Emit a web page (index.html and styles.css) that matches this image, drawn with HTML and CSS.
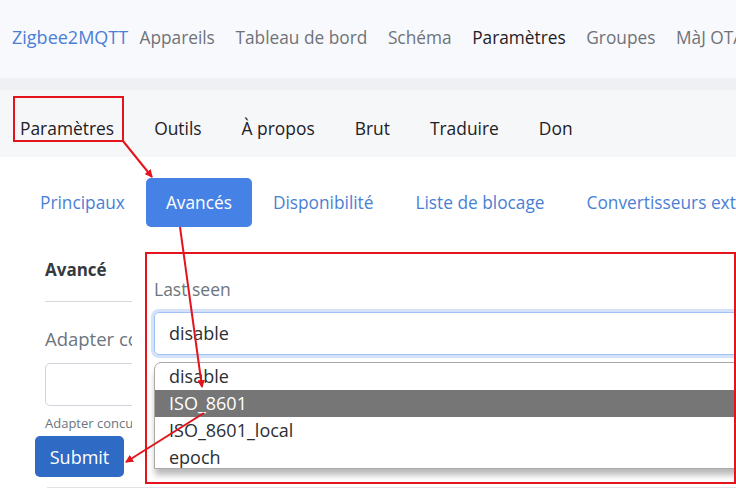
FILE: index.html
```html
<!DOCTYPE html>
<html lang="fr">
<head>
<meta charset="utf-8">
<title>Zigbee2MQTT - Paramètres</title>
<link rel="stylesheet" href="styles.css">
</head>
<body>
<header class="navbar">
  <a class="brand">Zigbee2MQTT</a>
  <nav class="nav-links">
    <a class="nav-link">Appareils</a>
    <a class="nav-link">Tableau de bord</a>
    <a class="nav-link">Schéma</a>
    <a class="nav-link active">Paramètres</a>
    <a class="nav-link">Groupes</a>
    <a class="nav-link">MàJ OTA</a>
  </nav>
</header>
<div class="band"></div>
<nav class="tabs">
  <a class="tab active">Paramètres</a>
  <a class="tab">Outils</a>
  <a class="tab">À propos</a>
  <a class="tab">Brut</a>
  <a class="tab">Traduire</a>
  <a class="tab">Don</a>
</nav>
<main class="content">
  <div class="pills">
    <a class="pill">Principaux</a>
    <a class="pill active">Avancés</a>
    <a class="pill">Disponibilité</a>
    <a class="pill">Liste de blocage</a>
    <a class="pill">Convertisseurs externes</a>
  </div>
  <div class="body">
    <section class="form-col">
      <h3 class="section-title">Avancé</h3>
      <div class="rule"></div>
      <label class="field-label">Adapter concurrent</label>
      <div class="input"></div>
      <div class="help">Adapter concurrent description</div>
      <button class="submit">Submit</button>
    </section>
    <section class="zoom-panel">
      <div class="callout">
        <div class="ls-label">Last seen</div>
        <div class="select">disable</div>
        <ul class="options">
          <li>disable</li>
          <li class="hl">ISO_8601</li>
          <li>ISO_8601_local</li>
          <li>epoch</li>
        </ul>
      </div>
    </section>
  </div>
  <div class="bottom-rule"></div>
</main>
<svg class="annotations" width="736" height="489" viewBox="0 0 736 489">
  <defs>
    <marker id="ah" markerWidth="8" markerHeight="8" refX="7" refY="4" orient="auto" markerUnits="userSpaceOnUse">
      <path d="M0,0 L8,4 L0,8 Z" fill="#e3141c"/>
    </marker>
  </defs>
  <rect x="14" y="97" width="109" height="44" fill="none" stroke="#e3141c" stroke-width="2"/>
  <line x1="123" y1="141" x2="152" y2="177" stroke="#e3141c" stroke-width="2" marker-end="url(#ah)"/>
  <line x1="180" y1="227" x2="202" y2="387" stroke="#e3141c" stroke-width="2" marker-end="url(#ah)"/>
  <line x1="204" y1="413" x2="126" y2="462" stroke="#e3141c" stroke-width="2" marker-end="url(#ah)"/>
</svg>
</body>
</html>
```
FILE: styles.css
```css
* { box-sizing: border-box; }
html, body { margin: 0; padding: 0; }
body {
  width: 736px;
  height: 489px;
  overflow: hidden;
  position: relative;
  background: #fff;
  font-family: "Open Sans", "Noto Sans", sans-serif;
  font-size: 17px;
  color: #212529;
}
a { text-decoration: none; }

.navbar {
  height: 78px;
  background: #f8f9fc;
  display: flex;
  align-items: center;
  padding-left: 12px;
  padding-bottom: 4px;
  white-space: nowrap;
  overflow: hidden;
}
.brand { color: #4a7fd6; margin-right: 1px; font-size: 18px; }
.nav-links { display: flex; }
.nav-link { color: #6f7378; padding: 0 10.3px; font-size: 17.3px; }
.nav-link.active { color: #1e2125; }

.band { height: 12px; background: #eff0f3; }

.tabs {
  height: 67px;
  background: #f6f7f9;
  display: flex;
  align-items: center;
  padding-top: 9px;
  white-space: nowrap;
}
.tab { color: #1e2125; padding: 0 20px; font-size: 17.4px; }

.content { background: #fff; }
.pills {
  display: flex;
  padding: 21px 0 0 19px;
  white-space: nowrap;
  overflow: hidden;
}
.pill {
  color: #4a7fd6;
  padding: 0 21px;
  height: 49px;
  line-height: 49px;
  border-radius: 5px;
  font-size: 17.3px;
}
.pill.active { background: #4681e6; color: #fff; padding: 0 20px; }

.body {
  display: grid;
  grid-template-columns: 132px 1fr;
}
.form-col {
  padding-left: 45px;
  overflow: hidden;
  white-space: nowrap;
}
.section-title {
  margin: 31px 0 0;
  font-size: 17px;
  font-weight: 700;
  color: #343a40;
  line-height: 24px;
}
.rule { height: 1px; background: #d5d8dc; margin-top: 19px; width: 200px; }
.field-label {
  display: block;
  margin-top: 25px;
  font-size: 18.5px;
  line-height: 24px;
  color: #6c757d;
}
.input {
  margin-top: 12px;
  width: 300px;
  height: 43px;
  border: 1px solid #ced4da;
  border-radius: 5px;
}
.help {
  margin-top: 8px;
  font-size: 13px;
  line-height: 18px;
  color: #6c757d;
}
.submit {
  display: block;
  margin: 4px 0 0 -10px;
  width: 89px;
  height: 41px;
  border: 0;
  border-radius: 5px;
  background: #2f6bc5;
  color: #fff;
  font-family: inherit;
  font-size: 18px;
  padding: 0;
}

.zoom-panel {
  background: #fff;
  padding: 25px 0 0 13px;
}
.callout {
  height: 232px;
  border: 2px solid #e3141c;
  padding: 24px 0 0 7px;
  overflow: hidden;
}
.ls-label { font-size: 17.5px; line-height: 22px; color: #6c757d; }
.select {
  margin-top: 12px;
  width: calc(100% + 20px);
  height: 43px;
  border: 1px solid #9ec0f2;
  box-shadow: 0 0 0 3px #d3e2f8;
  border-radius: 5px;
  padding-left: 14px;
  line-height: 41px;
  font-size: 18px;
  color: #2b2f33;
}
.options {
  list-style: none;
  margin: 7px 0 0;
  padding: 0;
  width: calc(100% + 20px);
  border: 1px solid #a9a9a9;
  border-radius: 7px 7px 0 0;
  box-shadow: 0 7px 6px -1px rgba(0, 0, 0, 0.28);
  background: #fff;
  height: 107px;
  overflow: hidden;
}
.options li {
  height: 27px;
  line-height: 27px;
  padding-left: 14px;
  font-size: 18px;
  color: #2b2f33;
}
.options li.hl { background: #767676; color: #fff; }

.bottom-rule { height: 1px; background: #dfe2e6; margin: 3px 0 0 47px; }

.annotations {
  position: absolute;
  left: 0;
  top: 0;
  pointer-events: none;
}
```
